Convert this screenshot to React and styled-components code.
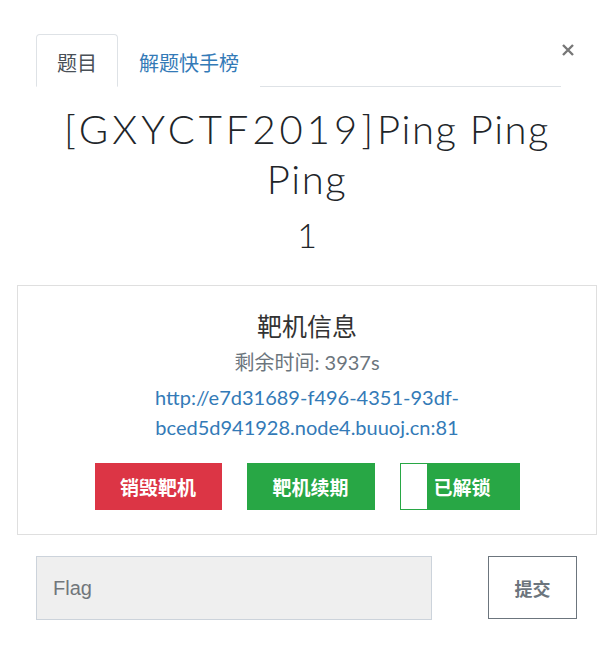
import React from "react";
import styled, { createGlobalStyle } from "styled-components";

const Global = createGlobalStyle`
  html, body { margin: 0; padding: 0; background: #fff; }
  body { font-family: Lato, "Noto Sans CJK SC", sans-serif; color: #212529; }
  * { box-sizing: border-box; }
`;

const Modal = styled.div`
  width: 612px;
  padding: 34px 15px 0 17px;
`;

const Header = styled.div`
  display: flex;
  align-items: flex-start;
  padding-left: 19px;
`;

const Tabs = styled.div`
  display: flex;
  width: 525px;
  border-bottom: 1px solid #dee2e6;
`;

const Tab = styled.div`
  height: 53px;
  margin-bottom: -1px;
  padding: 3px 20px 0;
  display: flex;
  align-items: center;
  font-size: 20px;
  font-family: Lato, "Noto Sans CJK SC", sans-serif;
  color: ${(p) => (p.$active ? "#495057" : "#337ab7")};
  background: #fff;
  border: 1px solid ${(p) => (p.$active ? "#dee2e6" : "transparent")};
  border-bottom-color: ${(p) => (p.$active ? "#fff" : "transparent")};
  border-radius: 4px 4px 0 0;
`;

const Close = styled.div`
  width: 14px;
  height: 32px;
  display: flex;
  align-items: center;
  justify-content: center;
`;

const Title = styled.h1`
  margin: 17px 0 0;
  text-align: center;
  font-family: Lato, sans-serif;
  font-weight: 300;
  font-size: 40px;
  line-height: 50px;
  letter-spacing: 1.5px;
  color: #212529;
  padding: 0 20px;
`;

const Tag = styled.span`
  letter-spacing: 4px;
`;

const Score = styled.div`
  text-align: center;
  font-family: Lato, sans-serif;
  font-weight: 300;
  font-size: 34px;
  line-height: 50px;
  margin-top: 6px;
  color: #212529;
`;

const Card = styled.div`
  margin-top: 25px;
  border: 1px solid #dfdfdf;
  height: 250px;
  padding-top: 22px;
  display: flex;
  flex-direction: column;
  align-items: center;
`;

const CardTitle = styled.div`
  font-size: 25px;
  line-height: 36px;
  color: #333;
`;

const Remain = styled.div`
  margin-top: 3px;
  font-size: 20px;
  line-height: 30px;
  color: #6c757d;
`;

const Link = styled.a`
  margin-top: 5px;
  font-size: 20px;
  line-height: 30px;
  color: #337ab7;
  text-decoration: none;
  text-align: center;
`;

const Buttons = styled.div`
  margin-top: 21px;
  display: flex;
  gap: 25px;
`;

const Btn = styled.div`
  width: ${(p) => p.$w}px;
  height: 47px;
  background: ${(p) => p.$bg};
  color: #fff;
  font-weight: 700;
  font-size: 19px;
  display: flex;
  align-items: center;
  justify-content: center;
  font-family: "Noto Sans CJK SC", sans-serif;
`;

const Toggle = styled.div`
  width: 120px;
  height: 47px;
  background: #28a745;
  border: 1px solid #28a745;
  display: flex;
  align-items: stretch;
  color: #fff;
  font-weight: 700;
  font-size: 19px;
  font-family: "Noto Sans CJK SC", sans-serif;
`;

const Knob = styled.div`
  width: 26px;
  background: #fff;
`;

const ToggleLabel = styled.div`
  flex: 1;
  display: flex;
  align-items: center;
  padding-left: 7px;
`;

const FlagRow = styled.div`
  margin-top: 21px;
  display: flex;
  align-items: flex-start;
  padding-left: 19px;
`;

const FlagInput = styled.input`
  width: 396px;
  height: 64px;
  background: #efefef;
  border: 1px solid #ccd3db;
  padding: 0 16px;
  font-family: "Liberation Sans", Arial, sans-serif;
  font-size: 20px;
  color: #495057;
  outline: none;
  &::placeholder { color: #71767b; }
`;

const Submit = styled.button`
  margin-left: 56px;
  width: 89px;
  height: 63px;
  background: #fff;
  border: 1px solid #6c757d;
  color: #6c757d;
  font-weight: 700;
  font-size: 18px;
  font-family: "Noto Sans CJK SC", sans-serif;
  padding: 0;
`;

export default function App() {
  return (
    <>
      <Global />
      <Modal>
        <Header>
          <Tabs>
            <Tab $active>题目</Tab>
            <Tab>解题快手榜</Tab>
          </Tabs>
          <Close>
            <svg width="14" height="14" viewBox="0 0 14 14">
              <path d="M2 2L12 12M12 2L2 12" stroke="#777" strokeWidth="2.4" />
            </svg>
          </Close>
        </Header>
        <Title>
          <Tag>[GXYCTF2019]</Tag>Ping Ping
          <br />
          Ping
        </Title>
        <Score>1</Score>
        <Card>
          <CardTitle>靶机信息</CardTitle>
          <Remain>剩余时间: 3937s</Remain>
          <Link href="#">http://e7d31689-f496-4351-93df-bced5d941928.node4.buuoj.cn:81</Link>
          <Buttons>
            <Btn $w={127} $bg="#dc3545">销毁靶机</Btn>
            <Btn $w={128} $bg="#28a745">靶机续期</Btn>
            <Toggle>
              <Knob />
              <ToggleLabel>已解锁</ToggleLabel>
            </Toggle>
          </Buttons>
        </Card>
        <FlagRow>
          <FlagInput placeholder="Flag" />
          <Submit>提交</Submit>
        </FlagRow>
      </Modal>
    </>
  );
}
